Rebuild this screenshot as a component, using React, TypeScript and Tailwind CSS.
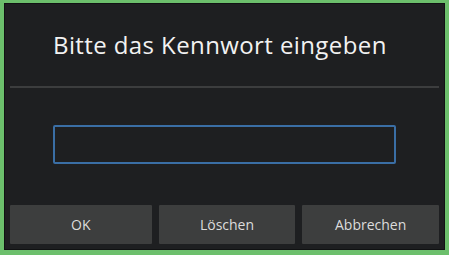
import React from 'react';

const FONT = { fontFamily: '"Open Sans", Lato, sans-serif' };

export default function App() {
    return (
        <div className="w-[449px] h-[255px] bg-[#6cbf6c] pl-[4px] pr-[4px] pt-[3px] pb-[5px]" style={FONT}>
            <div className="h-full border border-[#111213] bg-[#1e1f21] flex flex-col">
                {/* Title */}
                <div className="h-[82px] pl-[48px] pt-[26px] text-[24px] leading-[30px] tracking-[0.4px] text-[#f2f2f2]">
                    Bitte das Kennwort eingeben
                </div>
                <div className="mx-[5px] h-[2px] bg-[#3c3d3e]" />

                {/* Input */}
                <div className="flex justify-center pt-[37px]">
                    <input
                        type="password"
                        className="w-[343px] h-[39px] rounded-[2px] border-2 border-[#3a6ea5] bg-transparent outline-none"
                    />
                </div>

                {/* Buttons */}
                <div className="mt-auto mb-[5px] mx-[5px] flex gap-[7px] text-[14px] text-[#dcdcdc]">
                    <button className="w-[142px] h-[39px] bg-[#3d3e3e] rounded-[1px]">OK</button>
                    <button className="w-[137px] h-[39px] bg-[#3d3e3e] rounded-[1px]">Löschen</button>
                    <button className="w-[137px] h-[39px] bg-[#3d3e3e] rounded-[1px]">Abbrechen</button>
                </div>
            </div>
        </div>
    );
}
